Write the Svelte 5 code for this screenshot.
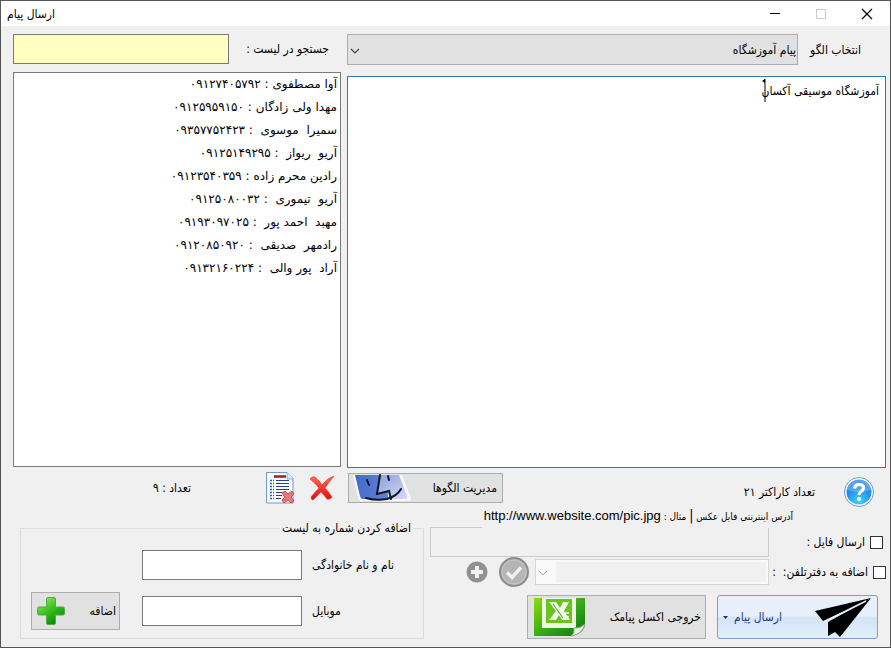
<script>
  const contacts = [
    ['آوا مصطفوی : ', '۰۹۱۲۷۴۰۵۷۹۲'],
    ['مهدا ولی زادگان : ', '۰۹۱۲۵۹۵۹۱۵۰'],
    ['سمیرا  موسوی  : ', '۰۹۳۵۷۷۵۲۴۲۳'],
    ['آریو  ریواز  : ', '۰۹۱۲۵۱۴۹۲۹۵'],
    ['رادین محرم زاده : ', '۰۹۱۲۳۵۴۰۳۵۹'],
    ['آریو  تیموری  : ', '۰۹۱۲۵۰۸۰۰۳۲'],
    ['مهبد  احمد پور  : ', '۰۹۱۹۳۰۹۷۰۲۵'],
    ['رادمهر  صدیقی  : ', '۰۹۱۲۰۸۵۰۹۲۰'],
    ['آراد  پور والی  : ', '۰۹۱۳۲۱۶۰۲۲۴']
  ];
  const rows = contacts.map(([name, phone]) => (name + phone).replaceAll(' ', '\u00a0'));
  let message = $state('آموزشگاه موسیقی آکسان');
</script>

<div class="window">
  <header>
    <h1 dir="rtl">ارسال پیام</h1>
    <div class="controls">
      <button aria-label="Minimize"><svg width="12" height="12"><path d="M1 5.500h10" stroke="#000" /></svg></button>
      <button aria-label="Maximize" disabled><svg width="12" height="12"><rect x="1.500" y="1.500" width="9" height="9" fill="none" stroke="#ccc" /></svg></button>
      <button aria-label="Close"><svg width="12" height="12"><path d="M1 1l10 10M11 1L1 11" stroke="#000" stroke-width="1.200" /></svg></button>
    </div>
  </header>

  <main>
    <section class="people">
      <div class="row search">
        <input id="search" class="yellow" type="text" dir="rtl" />
        <label for="search" dir="rtl">جستجو در لیست :</label>
      </div>
      <select class="list" multiple dir="rtl" aria-label="لیست">
        {#each rows as row}
          <option>{row}</option>
        {/each}
      </select>
    </section>
    <section class="compose">
      <div class="row template">
        <div class="combo">
          <select id="template" dir="rtl"><option>پیام آموزشگاه</option></select>
          <svg class="chevron" width="10" height="6"><path d="M1 1l4 4 4-4" fill="none" stroke="#444" stroke-width="1.200" /></svg>
        </div>
        <label for="template" dir="rtl">انتخاب الگو</label>
      </div>
      <div class="editor">
        <textarea dir="rtl" aria-label="متن پیام" bind:value={message}></textarea>
        <svg class="caret" width="4" height="23"><path d="M3 0v23" stroke="#000" /><path d="M3 0v4L0 2z" /></svg>
      </div>
    </section>
  </main>

  <div class="tools">
    <div class="list-tools">
      <span dir="rtl">تعداد : ۹</span>
      <button class="bare doc" aria-label="پاک کردن لیست">
        <svg width="30" height="34" viewBox="0 0 30 34">
          <path d="M1.500 1.500H22L28 7.500V32H1.500z" fill="#f8fbff" stroke="#6d9bc6" />
          <path d="M22 1.500V8h6" fill="#dbe9f7" stroke="#8fb3d6" />
          <path d="M9 5.500h12" stroke="#b3122b" stroke-width="2.500" />
          <path d="M5 9.500h4M5 12.500h4M5 15.500h4M5 18.500h4M5 21.500h4M5 24.500h4M5 27.500h4" stroke="#315fb0" stroke-width="1.300" stroke-dasharray="2 1" />
          <path d="M11 9.500h13M11 12.500h13M11 15.500h13M11 18.500h13M11 21.500h6M11 24.500h6M11 27.500h5" stroke="#24467e" stroke-width="1.200" />
          <path d="M17 22l3-2 3 3 4-3 2 3-3 3 3 4-3 2-3-3-4 3-2-3 3-3z" fill="#e57973" stroke="#c9534f" />
        </svg>
      </button>
      <button class="bare cross" aria-label="حذف">
        <svg width="26" height="26" viewBox="0 0 26 26">
          <defs><linearGradient id="red" x2="0" y2="1"><stop stop-color="#ff6a55" /><stop offset="1" stop-color="#db0d0d" /></linearGradient></defs>
          <path d="M1 4Q3 1 6 2Q10 5 13 10Q18 3 25 1Q20 7 16 13Q20 17 23 22Q21 25 18 24Q15 20 12 17Q8 21 4 25Q2 25 2 22Q6 17 10 13Q6 8 1 4z" fill="url(#red)" stroke="#e8352b" stroke-width=".6" />
        </svg>
      </button>
    </div>
    <div class="message-tools">
      <button class="face manage">
        <svg width="60" height="28" viewBox="0 0 60 28">
          <defs>
            <linearGradient id="fl" x2="1"><stop stop-color="#4469c8" /><stop offset="1" stop-color="#5f84da" /></linearGradient>
            <linearGradient id="fr" x2="1" y2="1"><stop stop-color="#8f9ee0" /><stop offset="1" stop-color="#d5dbf5" /></linearGradient>
          </defs>
          <path d="M1 1H50L59 24Q59 27 56 27H10Q7 27 6 24z" fill="#f6f8fd" />
          <path d="M3 1H28L25 20L36 18V25H10Q9 25 8 22z" fill="url(#fl)" />
          <path d="M28 1H47L55 22Q56 25 54 25H39L38 17L25 20z" fill="url(#fr)" />
          <path d="M15 6l2 5M36 2l1 4M28 1L25 20L37 17L39 25M14 24Q24 27 35 25Q45 22 49 15" fill="none" stroke="#101725" stroke-width="2" stroke-linecap="round" />
        </svg>
        <span dir="rtl">مدیریت الگوها</span>
      </button>
      <div class="help-group">
        <span dir="rtl">تعداد کاراکتر ۲۱</span>
        <button class="bare help" aria-label="راهنما">
          <svg width="32" height="32" viewBox="0 0 32 32">
            <defs><radialGradient id="blue" cy=".85" r=".85"><stop stop-color="#45d2fa" /><stop offset=".6" stop-color="#1c8fe8" /><stop offset="1" stop-color="#2f86dd" /></radialGradient></defs>
            <circle cx="16" cy="16" r="14.500" fill="#fff" stroke="#5a9bdc" />
            <circle cx="16" cy="16" r="12.500" fill="url(#blue)" />
            <path d="M4 14A12 12 0 0 1 28 14Q16 18 4 14z" fill="#fff" opacity=".22" />
            <path d="M11.500 12.500Q12 8.500 16 8.500Q20.500 8.500 20.500 12Q20.500 14 18 15.500Q16 17 16 19" fill="none" stroke="#fff" stroke-width="3.200" />
            <circle cx="16" cy="23" r="2" fill="#fff" />
          </svg>
        </button>
      </div>
    </div>
  </div>

  <div class="bottom">
    <fieldset>
      <legend dir="rtl">اضافه کردن شماره به لیست</legend>
      <div class="field">
        <input id="full-name" type="text" dir="rtl" />
        <label for="full-name" dir="rtl">نام و نام خانوادگی</label>
      </div>
      <div class="field">
        <button class="face add">
          <svg width="30" height="30" viewBox="0 0 30 30">
            <defs><linearGradient id="green" x2=".6" y2="1"><stop stop-color="#a4f06b" /><stop offset=".5" stop-color="#3fc425" /><stop offset="1" stop-color="#0a8a08" /></linearGradient></defs>
            <path d="M12 1.500h6q1.500 0 1.500 1.500v8H27q1.500 0 1.500 1.500v5q0 1.500-1.500 1.500h-7.500v8q0 1.500-1.500 1.500h-6q-1.500 0-1.500-1.500v-8H3q-1.500 0-1.500-1.500v-5Q1.500 11 3 11h7.500V3q0-1.500 1.500-1.500z" fill="url(#green)" stroke="#4fae3c" />
          </svg>
          <span dir="rtl">اضافه</span>
        </button>
        <input id="mobile" type="text" dir="rtl" />
        <label for="mobile" dir="rtl">موبایل</label>
      </div>
    </fieldset>

    <section class="send">
      <p class="hint" dir="rtl">آدرس اینترنتی فایل عکس <b>|</b> مثال : <span class="url" dir="ltr">http://www.website.com/pic.jpg</span></p>
      <div class="option">
        <input class="file" type="text" aria-label="فایل" disabled />
        <label class="inset" dir="rtl"><input type="checkbox" /><span>ارسال فایل :</span></label>
      </div>
      <div class="option">
        <div class="book">
          <button class="bare" disabled aria-label="افزودن">
            <svg width="22" height="22"><circle cx="11" cy="11" r="10.500" fill="#919191" /><path d="M11 5v12M5 11h12" stroke="#f2f2f2" stroke-width="4" /></svg>
          </button>
          <button class="bare" disabled aria-label="تایید">
            <svg width="32" height="32"><circle cx="16" cy="16" r="14" fill="#b5b5b5" stroke="#8c8c8c" stroke-width="2" /><circle cx="16" cy="16" r="12" fill="none" stroke="#c8c8c8" /><path d="M9 16.500l5 5 9-10" fill="none" stroke="#f0f0f0" stroke-width="3.500" /></svg>
          </button>
          <div class="combo">
            <select id="book" class="off" disabled dir="rtl" aria-label="دفتر تلفن"><option></option></select>
            <svg class="chevron" width="10" height="6"><path d="M1 1l4 4 4-4" fill="none" stroke="#aaa" /></svg>
          </div>
        </div>
        <label dir="rtl"><input type="checkbox" /><span>اضافه به دفترتلفن: &nbsp;:</span></label>
      </div>
      <div class="actions">
        <button class="face excel">
          <svg width="52" height="40" viewBox="0 0 52 40">
            <defs><linearGradient id="xl" x2="1" y2="1"><stop stop-color="#8fdc0c" /><stop offset=".55" stop-color="#35a718" /><stop offset="1" stop-color="#087415" /></linearGradient></defs>
            <path d="M0 1H51V28Q50 36 38 39H0z" fill="url(#xl)" />
            <path d="M8 1h34v30H8z" fill="#eef6e6" />
            <path d="M12 2h26v24H12z" fill="#68c31d" />
            <path d="M15 5h7l4 6 3-6h6l-5 9 6 9h-8l-3-5-3 5h-7l7-9z" fill="#f5faef" />
            <path d="M19 7l10 14" stroke="#59b51b" stroke-width="1.200" />
            <path d="M29 16h6M29 20h6" stroke="#f5faef" stroke-width="1.500" />
            <path d="M37 39Q41 36 40 31Q46 32 51 27Q49 37 37 39z" fill="#e9f2e4" stroke="#86ad7c" />
          </svg>
          <span dir="rtl">خروجی اکسل پیامک</span>
        </button>
        <button class="submit">
          <svg width="5" height="3"><path d="M0 0h5L2.500 3z" fill="#1e395b" /></svg>
          <span dir="rtl">ارسال پیام</span>
          <svg class="plane" width="58" height="40" viewBox="0 0 58 40"><path d="M57 1L1 14L9 24L50 5z" /><path d="M57 1L14 25V39L21 35L26 40z" /><path d="M52 4L10 25" stroke="#e8f0fb" stroke-width="1.500" /></svg>
        </button>
      </div>
    </section>
  </div>
</div>

<style>
  :global(body) { margin: 0; }
  .window, .window * { box-sizing: border-box; }
  .window {
    display: flex; flex-direction: column; min-height: 100vh;
    background: #f0f0f0; border: 1px solid #555; color: #000;
    font: 12px/20px "DejaVu Sans Condensed", "DejaVu Sans", sans-serif;
  }
  button, input, select, textarea { font: inherit; color: inherit; margin: 0; border-radius: 0; outline: 0; }
  button { padding: 0; }
  svg { display: block; flex: none; }
  input[type="text"] { min-width: 0; height: 30px; border: 1px solid #7a7a7a; background: #fff; padding: 0 4px; }
  label, span { white-space: nowrap; }

  header { display: flex; justify-content: space-between; align-items: center; height: 25px; background: #fff; padding-left: 6px; }
  h1 { margin: 0; font-size: 12px; font-weight: 400; }
  .controls { display: flex; }
  .controls button { width: 46px; height: 25px; display: grid; place-items: center; border: 0; background: none; }

  main { flex: 1; display: grid; grid-template-columns: minmax(0, 328fr) minmax(0, 539fr); gap: 6px; padding: 8px 4px 0 12px; }
  section { display: flex; flex-direction: column; min-width: 0; }
  .row { display: flex; align-items: center; }
  .search { justify-content: space-between; margin-bottom: 8px; }
  .search input { flex: 0 1 216px; }
  .search label { padding-right: 12px; }
  .search .yellow { background: #ffffc1; }
  .list { flex: 1; width: 100%; border: 1px solid #7a7a7a; background: #fff; padding: 4px 0 0; overflow: auto; margin-bottom: 1px; font-family: "DejaVu Sans", sans-serif; }
  .list option { line-height: 23px; min-height: 23px; padding: 0 3px; }

  .combo { position: relative; flex: 1; min-width: 0; }
  .combo select { display: block; appearance: none; width: 100%; height: 31px; padding: 0 1px 0 24px; border: 1px solid #adadad; background: #e1e1e1; }
  .chevron { position: absolute; left: 3px; top: 50%; margin-top: -2px; pointer-events: none; }
  .template { margin-bottom: 11px; }
  .template label { flex: 0 0 88px; padding-right: 25px; }
  .editor { flex: 1; display: flex; position: relative; }
  textarea { flex: 1; width: 100%; resize: none; border: 1px solid #2a7ab5; background: #fff; padding: 4px 6px; line-height: 20px; }
  .caret { position: absolute; top: 3px; right: 120px; }

  .tools { display: grid; grid-template-columns: minmax(0, 328fr) minmax(0, 539fr); gap: 6px; padding: 4px 4px 0 12px; height: 38px; }
  .list-tools { display: flex; justify-content: flex-end; align-items: center; gap: 14px; padding-right: 6px; height: 32px; }
  .list-tools span { margin-right: 60px; }
  .message-tools { display: flex; align-items: flex-start; justify-content: space-between; padding: 1px 11px 0 1px; }
  .help-group { display: flex; gap: 28px; align-items: center; padding-top: 3px; }
  .bare { border: 0; background: none; }
  .face { display: flex; align-items: center; justify-content: space-between; border: 1px solid #adadad; background: #e1e1e1; padding: 0 5px; }
  .manage { width: 155px; height: 30px; padding: 0 5px 0 3px; }

  .bottom { display: grid; grid-template-columns: minmax(0, 404fr) minmax(0, 456fr); gap: 6px; padding: 0 4px 8px 19px; }
  fieldset { min-width: 0; margin: 12px 0 0; border: 1px solid #dcdcdc; padding: 8px 10px 4px; height: 121px; }
  legend { margin-left: auto; margin-right: 0; padding: 0 2px; }
  .field { display: flex; align-items: center; justify-content: flex-end; gap: 10px; height: 38px; margin-bottom: 8px; }
  .field input[type="text"] { flex: 0 1 160px; }
  .field label { flex: 0 0 101px; }
  .field label { padding-left: 0; text-align: left; }
  .add { width: 89px; height: 38px; padding: 0 3px 0 4px; margin-right: auto; }

  .hint { position: relative; z-index: 1; align-self: flex-end; margin: 0 91px -1px 0; background: #f0f0f0; padding: 0 2px; font-size: 10px; line-height: 18px; height: 22px; white-space: nowrap; }
  .hint b { font-weight: 400; font-size: 14px; }
  .url { font-family: "Liberation Sans", Arial, sans-serif; font-size: 13px; }
  .option { display: grid; grid-template-columns: minmax(0, 1fr) 113px; gap: 4px; align-items: center; }
  .option label { display: flex; align-items: center; gap: 5px; }
  .option .inset { padding-right: 3px; }
  .option input[type="checkbox"] { appearance: none; flex: none; width: 13px; height: 13px; border: 1px solid #333; background: #fff; }
  .option input[type="checkbox"]:checked { background: #2a7ab5; }
  .option .file { width: 100%; border-color: #ccc; background: #f0f0f0; }
  .book { display: flex; align-items: center; justify-content: flex-end; gap: 5px; padding-left: 36px; height: 30px; }
  .book .bare:first-child { margin-right: 5px; }
  .book .combo select { height: 26px; border-color: #ccc; background: linear-gradient(#f0f0f0, #f0f0f0) right 2px center / calc(100% - 22px) 20px no-repeat #fff; }
  .actions { display: flex; justify-content: flex-end; gap: 11px; padding: 8px 8px 0 0; }
  .excel { width: 179px; height: 44px; padding: 0 4px 0 6px; }
  .submit { display: flex; align-items: center; width: 161px; height: 44px; padding: 0 5px; gap: 6px; border: 1px solid #7f9fcf; border-radius: 3px; color: #1e3f8a; background: linear-gradient(#e6effa 0 48%, #d4e4f7 52%, #e3eefb); }
  .submit .plane { margin-left: auto; }
</style>
